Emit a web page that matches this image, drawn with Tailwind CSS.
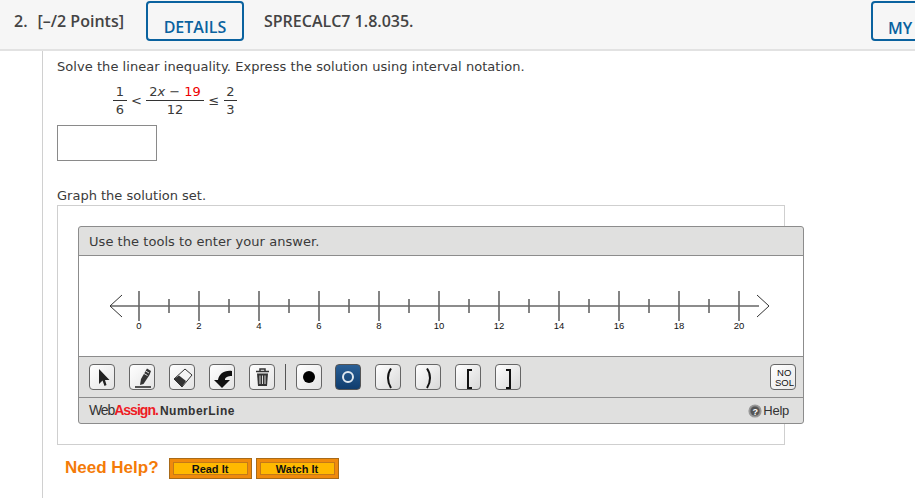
<!DOCTYPE html>
<html><head><meta charset="utf-8"><script src="https://cdn.jsdelivr.net/npm/@tailwindcss/browser@4"></script></head>
<body class="w-[915px] h-[498px] overflow-hidden bg-white font-['DejaVu_Sans',sans-serif] text-[#3a3a3a]">
<header class="h-[51px] bg-[#f6f6f6] border-b-2 border-[#e2e2e2] relative flex items-start font-['Open_Sans',sans-serif] font-semibold text-[#444] overflow-hidden">
  <span class="ml-[14px] mt-[11px] text-[16px] leading-[20px] font-semibold">2.</span>
  <span class="ml-[10px] mt-[11px] text-[16px] leading-[20px] font-semibold">[–/2 Points]</span>
  <div class="ml-[22px] mt-[1px] w-[98px] h-[40px] border-2 border-[#0a629f] rounded-[4px] text-[#0a629f] text-[16px] flex items-end justify-center leading-[24px]">DETAILS</div>
  <span class="ml-[20px] mt-[11px] text-[16px] leading-[20px] font-semibold">SPRECALC7 1.8.035.</span>
  <div class="absolute left-[871px] top-[1px] w-[60px] h-[40px] border-2 border-[#0a629f] rounded-[4px] text-[#0a629f] text-[16px] pl-[15px] pt-[13px] leading-[24px]">MY</div>
</header>
<main class="ml-[42px] h-[447px] border-l border-[#d0d0d0] pl-[14px] text-[13px]">
  <p class="pt-[8px] leading-[16px] tracking-[0.05px]">Solve the linear inequality. Express the solution using interval notation.</p>
  <div class="ml-[56px] mt-[8px] h-[35px] flex items-center text-[13px] leading-[15px]">
    <div class="flex flex-col items-center w-[14px]"><span class="pb-[1px]">1</span><span class="border-t border-[#333] w-full text-center pt-[1px]">6</span></div>
    <span class="w-[19px] text-center">&lt;</span>
    <div class="flex flex-col items-center w-[58px]"><span class="pb-[1px]">2<i>x</i> − <span class="text-[#ee0000]">19</span></span><span class="border-t border-[#333] w-full text-center pt-[1px]">12</span></div>
    <span class="w-[20px] text-center">≤</span>
    <div class="flex flex-col items-center w-[13px]"><span class="pb-[1px]">2</span><span class="border-t border-[#333] w-full text-center pt-[1px]">3</span></div>
  </div>
  <div class="mt-[7px] w-[100px] h-[36px] border border-[#8a8a8a] bg-white"></div>
  <p class="mt-[27px] leading-[16px]">Graph the solution set.</p>
  <section class="mt-[1px] w-[728px] h-[240px] border border-[#cfcfcf] pt-[20px] pl-[20px]">
    <div class="w-[726px] h-[198px] border border-[#8c8c8c] rounded-[3px] bg-[#e0e0df] flex flex-col overflow-hidden">
      <div class="h-[29px] border-b border-[#8c8c8c] pl-[10px] leading-[30px] text-[13px] tracking-[0.05px]">Use the tools to enter your answer.</div>
      <div class="h-[100px] bg-white relative">
        <svg width="724" height="100" class="block" font-family="Liberation Sans" font-size="9.5" fill="#111" text-anchor="middle">
          <g stroke="#666" stroke-width="1.6" fill="none">
            <path d="M31 50H680"/>
            <path d="M60 35V65M120 35V65M180 35V65M240 35V65M300 35V65M360 35V65M420 35V65M480 35V65M540 35V65M600 35V65M660 35V65"/>
            <path d="M90 43V57M150 43V57M210 43V57M270 43V57M330 43V57M390 43V57M450 43V57M510 43V57M570 43V57M630 43V57"/>
          </g>
          <path d="M43 39L31 50L43 61M678 39L690 50L678 61" stroke="#333" stroke-width="1" fill="none"/>
          <text x="60" y="73">0</text><text x="120" y="73">2</text><text x="180" y="73">4</text><text x="240" y="73">6</text><text x="300" y="73">8</text><text x="360" y="73">10</text><text x="420" y="73">12</text><text x="480" y="73">14</text><text x="540" y="73">16</text><text x="600" y="73">18</text><text x="660" y="73">20</text>
        </svg>
      </div>
      <div class="h-[42px] border-t border-[#8c8c8c] border-b flex items-center pl-[10px] gap-[14px] relative">
        <button class="w-[26px] h-[26px] border border-[#666] rounded-[4px] bg-gradient-to-br from-white to-[#e4e4e4]"><svg width="24" height="24" viewBox="0 0 24 24" class="block"><path d="M9 4V19L12.500 15.500L14.500 21L16.500 20L15 15H19.500Z" fill="#222"/></svg></button>
        <button class="w-[26px] h-[26px] border border-[#666] rounded-[4px] bg-gradient-to-br from-white to-[#e4e4e4]"><svg width="24" height="24" viewBox="0 0 24 24" class="block"><path d="M10 20L11 14L17 3.500L21 6L19.500 10L13.500 19Z" fill="#333"/><path d="M14 8.500L17.500 10.500M15.500 6L19 8" stroke="#ddd" fill="none"/><path d="M5 22H21" stroke="#222" stroke-width="1.500"/></svg></button>
        <button class="w-[26px] h-[26px] border border-[#666] rounded-[4px] bg-gradient-to-br from-white to-[#e4e4e4]"><svg width="24" height="24" viewBox="0 0 24 24" class="block"><path d="M4 14L15 4L22 10L12 22Z" fill="#f4f4f4" stroke="#333"/><path d="M4 14L9 10.500L16 16L12 22Z" fill="#333"/></svg></button>
        <button class="w-[26px] h-[26px] border border-[#666] rounded-[4px] bg-gradient-to-br from-white to-[#e4e4e4]"><svg width="24" height="24" viewBox="0 0 24 24" class="block"><path d="M22 6C14 5 9 9 8 15H4L12 23L20 15H15C15 12 18 11 22 11Z" fill="#111"/></svg></button>
        <button class="w-[26px] h-[26px] border border-[#666] rounded-[4px] bg-gradient-to-br from-white to-[#e4e4e4]"><svg width="24" height="24" viewBox="0 0 24 24" class="block"><path d="M6 6.500H19M10 6V4H15V6" stroke="#333" stroke-width="1.500" fill="none"/><path d="M7 8.500H18L17 21H8Z" fill="#333"/><path d="M10 10.500V19M12.500 10.500V19M15 10.500V19" stroke="#ddd"/></svg></button>
        <div class="w-[1px] h-[26px] -mx-[4px] bg-[#555]"></div>
        <button class="w-[26px] h-[26px] border border-[#666] rounded-[4px] bg-gradient-to-br from-white to-[#e4e4e4] flex items-center justify-center"><span class="w-[12px] h-[12px] rounded-full bg-black"></span></button>
        <button class="-ml-[1px] w-[26px] h-[26px] border border-[#555] rounded-[4px] bg-gradient-to-b from-[#2a6096] to-[#0f3d6e] flex items-center justify-center"><span class="w-[12px] h-[12px] rounded-full border-[2.500px] border-[#dfe8f0]"></span></button>
        <button class="w-[26px] h-[26px] border border-[#666] rounded-[4px] bg-gradient-to-br from-white to-[#d8d8d8]"><svg width="24" height="24" viewBox="0 0 24 24" class="block"><path d="M15 3.500C11 9 11 17 15 23" stroke="#111" stroke-width="2" fill="none"/></svg></button>
        <button class="w-[26px] h-[26px] border border-[#666] rounded-[4px] bg-gradient-to-br from-white to-[#d8d8d8]"><svg width="24" height="24" viewBox="0 0 24 24" class="block"><path d="M11 3.500C15 9 15 17 11 23" stroke="#111" stroke-width="2" fill="none"/></svg></button>
        <button class="w-[26px] h-[26px] border border-[#666] rounded-[4px] bg-gradient-to-br from-white to-[#d8d8d8]"><svg width="24" height="24" viewBox="0 0 24 24" class="block"><path d="M16 5H12V23H16" stroke="#111" stroke-width="2" fill="none"/></svg></button>
        <button class="w-[26px] h-[26px] border border-[#666] rounded-[4px] bg-gradient-to-br from-white to-[#d8d8d8]"><svg width="24" height="24" viewBox="0 0 24 24" class="block"><path d="M10 5H14V23H10" stroke="#111" stroke-width="2" fill="none"/></svg></button>
        <button class="absolute left-[691px] top-[7px] w-[26px] h-[26px] border border-[#666] rounded-[4px] bg-gradient-to-br from-white to-[#e8e8e8] font-['Liberation_Sans',sans-serif] text-[9.5px] leading-[10px] text-[#111] text-right pr-[1px] pt-[1px]">NO&nbsp;<br>SOL</button>
      </div>
      <div class="flex-1 border-t border-[#8c8c8c] -mt-[1px] flex items-center justify-between pl-[10px] pr-[14px] font-['Liberation_Sans',sans-serif]">
        <div class="flex items-baseline text-[14px] leading-[24px]"><span class="tracking-[-0.08em] text-[#333]">Web</span><span class="font-bold tracking-[-0.07em] text-[#ee1c25]">Assign.</span><span class="font-bold text-[12px] text-[#333] tracking-[0.5px] ml-[2px]">NumberLine</span></div>
        <div class="flex items-center text-[13px] text-[#333] tracking-[-0.02em]"><svg width="14" height="14" viewBox="0 0 14 14" class="mr-[1px]"><circle cx="7" cy="7" r="6" fill="#8a8a8a" stroke="#999" stroke-width="1.200"/><circle cx="7" cy="7" r="4.500" fill="#555"/><text x="7" y="10.500" font-size="9" font-weight="bold" fill="#fff" text-anchor="middle" font-family="Liberation Sans">?</text></svg>Help</div>
      </div>
    </div>
  </section>
  <div class="mt-[12px] flex items-center font-['Liberation_Sans',sans-serif]">
    <span class="ml-[8px] text-[17px] font-bold text-[#f47b08] leading-[22px]">Need Help?</span>
    <button class="ml-[10px] w-[83px] h-[21px] border border-[#a86a18] bg-[#f08a0c] p-[3px] flex"><span class="flex-1 border border-[#c47a18] bg-[#ffb900] text-[11px] font-bold text-[#111] leading-[13px]">Read It</span></button>
    <button class="ml-[4px] w-[83px] h-[21px] border border-[#a86a18] bg-[#f08a0c] p-[3px] flex"><span class="flex-1 border border-[#c47a18] bg-[#ffb900] text-[11px] font-bold text-[#111] leading-[13px]">Watch It</span></button>
  </div>
</main>
</body></html>
